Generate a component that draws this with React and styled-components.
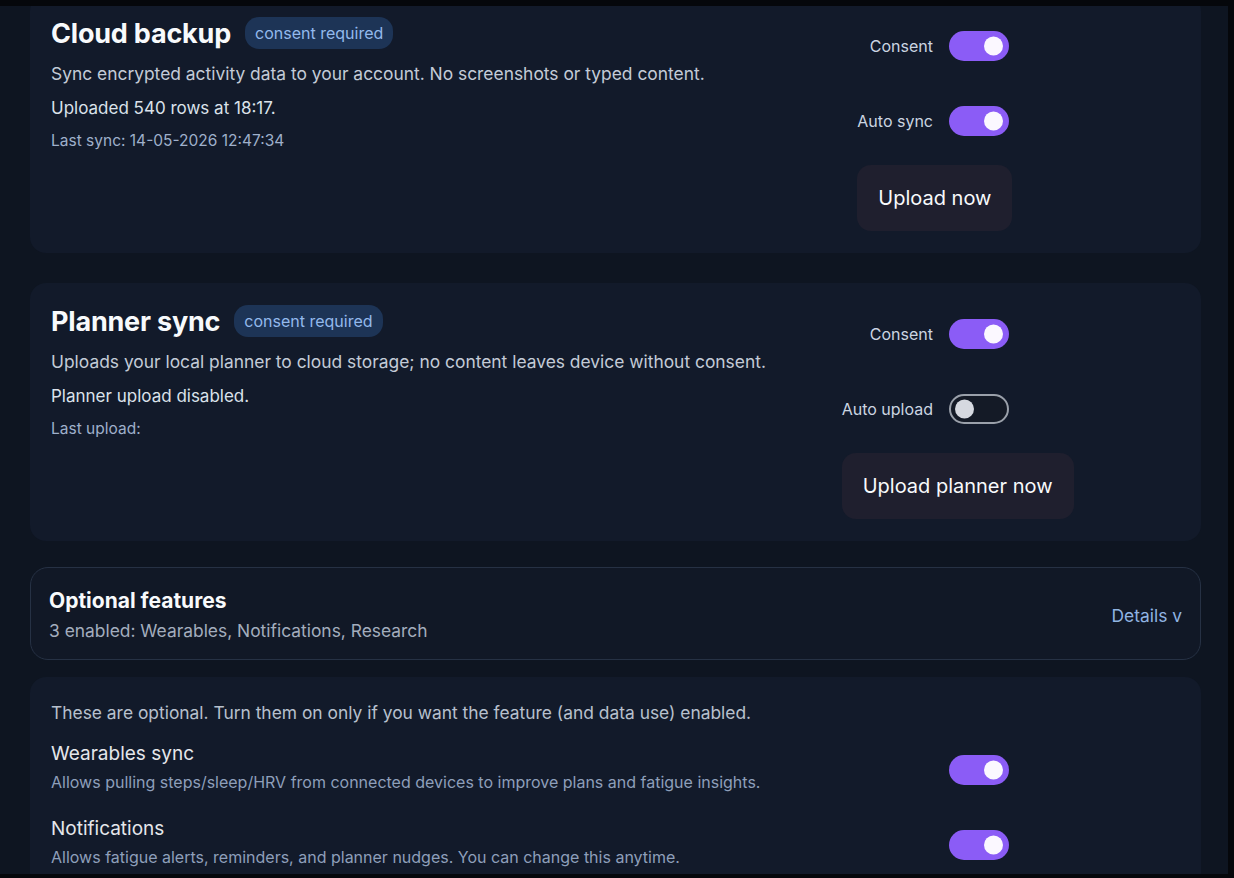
import React from "react";
import styled, { createGlobalStyle } from "styled-components";

const GlobalStyle = createGlobalStyle`
  html, body {
    margin: 0;
    padding: 0;
    background: #05070b;
    font-family: Inter, "Liberation Sans", sans-serif;
    -webkit-font-smoothing: antialiased;
  }
  * { box-sizing: border-box; }
`;

const Frame = styled.div`
  height: 100vh;
  padding: 6px 6px 4px 0;
`;

const Viewport = styled.div`
  height: 100%;
  overflow: hidden;
  background: #0e1521;
  padding: 0 27px 0 30px;
`;

const Card = styled.section`
  display: flex;
  align-items: flex-start;
  background: #121a2a;
  border-radius: 16px;
  padding: 20px 192px 22px 21px;
  margin-top: ${(p) => p.$top || 0}px;
`;

const Main = styled.div`
  flex: 1;
  min-width: 0;
`;

const TitleRow = styled.div`
  display: flex;
  align-items: center;
  gap: 14px;
  height: 36px;
`;

const Title = styled.h2`
  margin: 0;
  font-size: 27px;
  font-weight: 700;
  color: #f8fafc;
  letter-spacing: -0.2px;
`;

const Badge = styled.span`
  display: inline-flex;
  align-items: center;
  height: 32px;
  padding: 0 10px;
  border-radius: 14px;
  background: #1d3456;
  color: #93b9ec;
  font-size: 16px;
`;

const Desc = styled.p`
  margin: 11px 0 0;
  font-size: 17.4px;
  line-height: 24px;
  color: #c3cbd7;
`;

const Status = styled.p`
  margin: 9px 0 0;
  font-size: 17px;
  line-height: 26px;
  color: #dbe2ea;
`;

const Meta = styled.p`
  margin: 9px 0 0;
  font-size: 15.5px;
  line-height: 22px;
  color: #9fb0cb;
`;

const Controls = styled.div`
  display: flex;
  flex-direction: column;
  align-items: flex-end;
`;

const ControlRow = styled.label`
  display: flex;
  align-items: center;
  gap: 16px;
  height: 62px;
  & + & {
    margin-top: 13px;
  }
`;

const ControlLabel = styled.span`
  font-size: 16px;
  color: #cbd5e1;
`;

const Toggle = styled.span`
  position: relative;
  display: inline-block;
  width: 60px;
  height: 30px;
  border-radius: 15px;
  flex-shrink: 0;
  margin-top: ${(p) => p.$shift || 0}px;
  background: ${(p) => (p.$on ? "#8b5cf6" : "#141a26")};
  border: ${(p) => (p.$on ? "none" : "2px solid #9aa0aa")};
  &::after {
    content: "";
    position: absolute;
    top: 50%;
    width: 19px;
    height: 19px;
    border-radius: 50%;
    transform: translateY(-50%);
    background: ${(p) => (p.$on ? "#fbf8ff" : "#d6d9e0")};
    ${(p) => (p.$on ? "right: 6px;" : "left: 4px;")}
  }
`;

const ButtonSlot = styled.div`
  align-self: stretch;
  width: 0;
  min-width: 100%;
  margin-top: 13px;
`;

const ActionButton = styled.button`
  width: max-content;
  height: 66px;
  padding: 0 21px;
  border: none;
  border-radius: 14px;
  background: #1f1f2e;
  color: #f8fafc;
  font-family: inherit;
  font-size: 20px;
  cursor: pointer;
`;

const Summary = styled.div`
  display: flex;
  align-items: center;
  justify-content: space-between;
  margin-top: 26px;
  padding: 19px 18px 16px;
  border: 1px solid #263144;
  border-radius: 18px;
  background: #111826;
`;

const SummaryTitle = styled.div`
  font-size: 21px;
  line-height: 28px;
  font-weight: 700;
  color: #f8fafc;
`;

const SummaryText = styled.div`
  margin-top: 4px;
  font-size: 17.4px;
  line-height: 24px;
  color: #a3adbd;
`;

const DetailsLink = styled.button`
  border: none;
  background: none;
  padding: 0;
  font-family: inherit;
  font-size: 17.4px;
  color: #90b4e2;
  cursor: pointer;
`;

const Panel = styled.section`
  margin-top: 17px;
  background: #121a2a;
  border-radius: 16px;
  padding: 23px 192px 20px 21px;
`;

const Intro = styled.p`
  margin: 0;
  font-size: 17.4px;
  line-height: 26px;
  color: #b7c0cd;
`;

const FeatureRow = styled.div`
  display: flex;
  align-items: center;
  justify-content: space-between;
  margin-top: ${(p) => p.$gap}px;
`;

const FeatureName = styled.div`
  font-size: 19px;
  line-height: 26px;
  color: #e5e7eb;
`;

const FeatureDesc = styled.div`
  margin-top: 4px;
  font-size: 16px;
  line-height: 22px;
  color: #8e9fba;
`;

const SyncCard = ({ top, title, desc, status, meta, toggles, action }) => (
  <Card $top={top}>
    <Main>
      <TitleRow>
        <Title>{title}</Title>
        <Badge>consent required</Badge>
      </TitleRow>
      <Desc>{desc}</Desc>
      <Status>{status}</Status>
      <Meta>{meta}</Meta>
    </Main>
    <Controls>
      {toggles.map((t) => (
        <ControlRow key={t.label}>
          <ControlLabel>{t.label}</ControlLabel>
          <Toggle $on={t.on} />
        </ControlRow>
      ))}
      <ButtonSlot>
        <ActionButton>{action}</ActionButton>
      </ButtonSlot>
    </Controls>
  </Card>
);

const features = [
  {
    name: "Wearables sync",
    desc: "Allows pulling steps/sleep/HRV from connected devices to improve plans and fatigue insights.",
    gap: 15,
  },
  {
    name: "Notifications",
    desc: "Allows fatigue alerts, reminders, and planner nudges. You can change this anytime.",
    gap: 23,
  },
];

export default function App() {
  return (
    <>
      <GlobalStyle />
      <Frame>
        <Viewport>
          <SyncCard
            top={-11}
            title="Cloud backup"
            desc="Sync encrypted activity data to your account. No screenshots or typed content."
            status="Uploaded 540 rows at 18:17."
            meta="Last sync: 14-05-2026 12:47:34"
            toggles={[
              { label: "Consent", on: true },
              { label: "Auto sync", on: true },
            ]}
            action="Upload now"
          />
          <SyncCard
            top={30}
            title="Planner sync"
            desc="Uploads your local planner to cloud storage; no content leaves device without consent."
            status="Planner upload disabled."
            meta="Last upload:"
            toggles={[
              { label: "Consent", on: true },
              { label: "Auto upload", on: false },
            ]}
            action="Upload planner now"
          />
          <Summary>
            <div>
              <SummaryTitle>Optional features</SummaryTitle>
              <SummaryText>3 enabled: Wearables, Notifications, Research</SummaryText>
            </div>
            <DetailsLink>Details v</DetailsLink>
          </Summary>
          <Panel>
            <Intro>
              These are optional. Turn them on only if you want the feature (and data use) enabled.
            </Intro>
            {features.map((f) => (
              <FeatureRow key={f.name} $gap={f.gap}>
                <div>
                  <FeatureName>{f.name}</FeatureName>
                  <FeatureDesc>{f.desc}</FeatureDesc>
                </div>
                <Toggle $on $shift={5} />
              </FeatureRow>
            ))}
          </Panel>
        </Viewport>
      </Frame>
    </>
  );
}
